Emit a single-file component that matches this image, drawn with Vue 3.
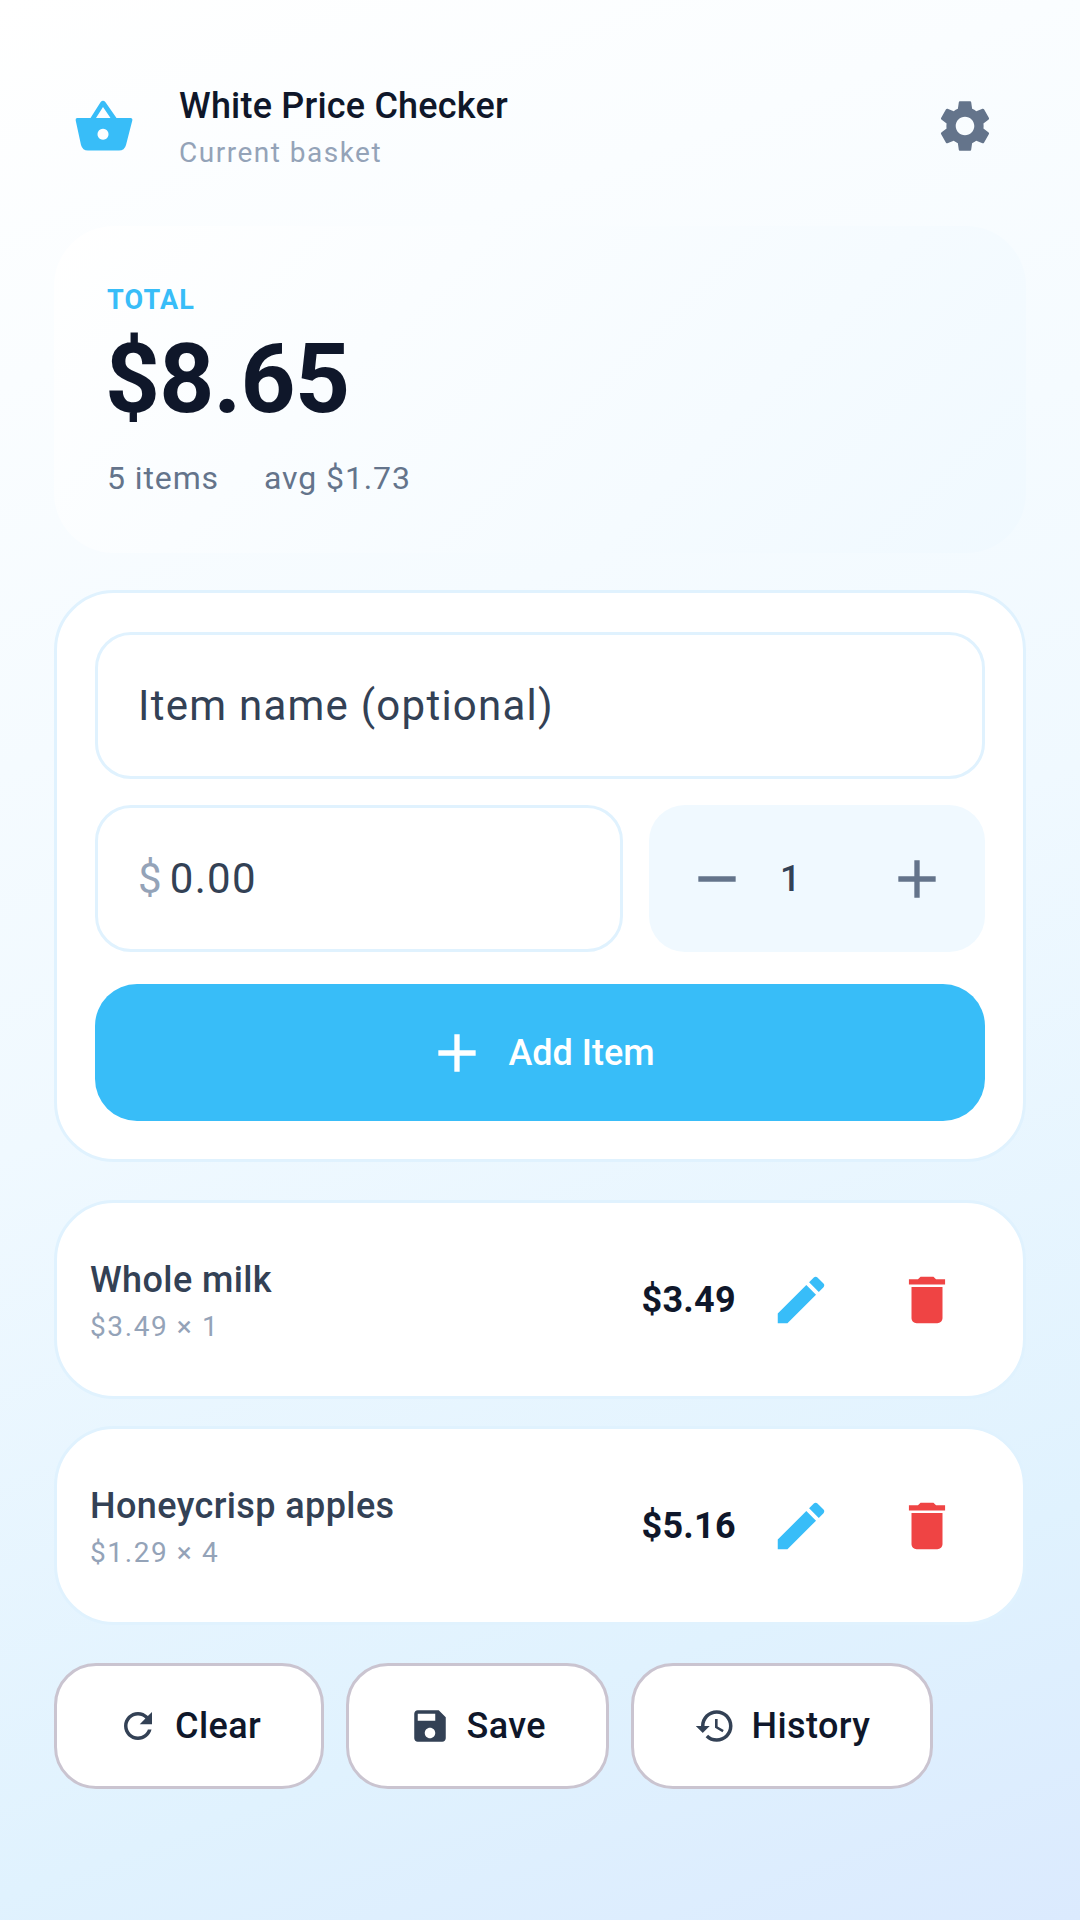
<script setup>
import { ref } from 'vue'

const items = ref([
  { name: 'Whole milk', detail: '$3.49 × 1', total: '$3.49' },
  { name: 'Honeycrisp apples', detail: '$1.29 × 4', total: '$5.16' }
])

const actions = ref([
  {
    label: 'Clear',
    icon: 'M17.65 6.35C16.2 4.9 14.21 4 12 4c-4.42 0-7.99 3.58-7.99 8s3.57 8 7.99 8c3.73 0 6.84-2.55 7.73-6h-2.08c-.82 2.33-3.04 4-5.65 4-3.31 0-6-2.69-6-6s2.69-6 6-6c1.66 0 3.14.69 4.22 1.78L13 11h7V4l-2.35 2.35z'
  },
  {
    label: 'Save',
    icon: 'M17 3H5c-1.11 0-2 .9-2 2v14c0 1.1.89 2 2 2h14c1.1 0 2-.9 2-2V7l-4-4zm-5 16c-1.66 0-3-1.34-3-3s1.34-3 3-3 3 1.34 3 3-1.34 3-3 3zm3-10H5V5h10v4z'
  },
  {
    label: 'History',
    icon: 'M13 3c-4.97 0-9 4.03-9 9H1l3.89 3.89.07.14L9 12H6c0-3.87 3.13-7 7-7s7 3.13 7 7-3.13 7-7 7c-1.93 0-3.68-.79-4.94-2.06l-1.42 1.42C8.27 19.99 10.51 21 13 21c4.97 0 9-4.03 9-9s-4.03-9-9-9zm-1 5v5l4.28 2.54.72-1.21-3.5-2.08V8h-1.5z'
  }
])

const plus = 'M19 13h-6v6h-2v-6H5v-2h6V5h2v6h6v2z'
</script>

<template>
  <div class="page">
    <header class="top">
      <div class="logo">
        <svg viewBox="0 0 60 54" class="logo-icon">
          <path fill-rule="evenodd" d="M3 19H16.500L26.500 3.200Q29 0.500 31.500 3.200L42.500 19H56.500Q58.800 19 58.300 21.500L52 46Q50.500 51.500 45 51.500H14Q8.500 51.500 7 46L1.700 21.500Q1.200 19 3 19ZM22 19H36.500L29 8ZM29 29.800a5.500 5.500 0 1 0 0.010 0Z"/>
        </svg>
      </div>
      <div class="brand">
        <h1>White Price Checker</h1>
        <p>Current basket</p>
      </div>
      <button class="gear">
        <svg viewBox="0 0 24 24"><path d="M19.14 12.94c.04-.3.06-.61.06-.94 0-.32-.02-.64-.07-.94l2.03-1.58c.18-.14.23-.41.12-.61l-1.92-3.32c-.12-.22-.37-.29-.59-.22l-2.39.96c-.5-.38-1.03-.7-1.62-.94l-.36-2.54c-.04-.24-.24-.41-.48-.41h-3.84c-.24 0-.43.17-.47.41l-.36 2.54c-.59.24-1.13.57-1.62.94l-2.39-.96c-.22-.08-.47 0-.59.22L2.74 8.87c-.12.21-.08.47.12.61l2.03 1.58c-.05.3-.09.63-.09.94s.02.64.07.94l-2.03 1.58c-.18.14-.23.41-.12.61l1.92 3.32c.12.22.37.29.59.22l2.39-.96c.5.38 1.03.7 1.62.94l.36 2.54c.05.24.24.41.48.41h3.84c.24 0 .44-.17.47-.41l.36-2.54c.59-.24 1.13-.56 1.62-.94l2.39.96c.22.08.47 0 .59-.22l1.92-3.32c.12-.22.07-.47-.12-.61l-2.01-1.58zM12 15.6c-1.98 0-3.6-1.62-3.6-3.6s1.62-3.6 3.6-3.6 3.6 1.62 3.6 3.6-1.62 3.6-3.6 3.6z"/></svg>
      </button>
    </header>

    <section class="hero">
      <span class="hero-label">TOTAL</span>
      <div class="hero-total">$8.65</div>
      <div class="hero-meta">
        <span>5 items</span>
        <span>avg $1.73</span>
      </div>
    </section>

    <section class="form">
      <div class="field">Item name (optional)</div>
      <div class="form-row">
        <div class="field price"><span class="currency">$</span>0.00</div>
        <div class="stepper">
          <svg viewBox="0 0 24 24"><path d="M19 13H5v-2h14v2z"/></svg>
          <span class="qty">1</span>
          <svg viewBox="0 0 24 24"><path :d="plus"/></svg>
        </div>
      </div>
      <button class="add">
        <svg viewBox="0 0 24 24"><path :d="plus"/></svg>
        <span>Add Item</span>
      </button>
    </section>

    <div class="items">
      <div v-for="item in items" :key="item.name" class="item">
        <div class="item-info">
          <div class="item-name">{{ item.name }}</div>
          <div class="item-detail">{{ item.detail }}</div>
        </div>
        <div class="item-total">{{ item.total }}</div>
        <button class="icon-btn edit">
          <svg viewBox="0 0 24 24"><path d="M3 17.25V21h3.75L17.81 9.94l-3.75-3.75L3 17.25zM20.71 7.04c.39-.39.39-1.02 0-1.41l-2.34-2.34c-.39-.39-1.02-.39-1.41 0l-1.83 1.83 3.75 3.75 1.83-1.83z"/></svg>
        </button>
        <button class="icon-btn del">
          <svg viewBox="0 0 24 24"><path d="M6 19c0 1.1.9 2 2 2h8c1.1 0 2-.9 2-2V7H6v12zM19 4h-3.5l-1-1h-5l-1 1H5v2h14V4z"/></svg>
        </button>
      </div>
    </div>

    <div class="actions">
      <button v-for="action in actions" :key="action.label" class="action">
        <svg viewBox="0 0 24 24"><path :d="action.icon"/></svg>
        <span>{{ action.label }}</span>
      </button>
    </div>
  </div>
</template>

<style>
html, body {
  margin: 0;
  padding: 0;
}
</style>

<style scoped>
* {
  box-sizing: border-box;
}

.page {
  width: 1080px;
  height: 1920px;
  padding: 66px 54px 0;
  overflow: hidden;
  font-family: Roboto, "Noto Sans", sans-serif;
  background: linear-gradient(160deg, #ffffff 0%, #f0f9ff 50%, #e0f2fe 82%, #dbeafe 100%);
}

button {
  border: none;
  background: none;
  padding: 0;
  font-family: inherit;
  display: flex;
  align-items: center;
  justify-content: center;
}

.top {
  display: flex;
  align-items: center;
  height: 120px;
}

.logo {
  width: 125px;
  height: 120px;
  display: flex;
  align-items: center;
  padding-left: 20px;
}

.logo-icon {
  width: 60px;
  height: 54px;
  fill: #38bdf8;
}

.brand {
  flex: 1;
}

.brand h1 {
  margin: 2px 0 0;
  font-size: 36px;
  line-height: 44px;
  font-weight: 500;
  letter-spacing: 0.2px;
  color: #0f172a;
}

.brand p {
  margin: 7px 0 0;
  font-size: 28px;
  line-height: 36px;
  letter-spacing: 1.5px;
  font-weight: 400;
  color: #94a3b8;
}

.gear {
  width: 62px;
  height: 62px;
  margin-right: 30px;
}

.gear svg {
  width: 62px;
  height: 62px;
  fill: #64748b;
}

.hero {
  margin-top: 40px;
  height: 327px;
  padding: 59px 53px 0;
  border-radius: 60px;
  background: linear-gradient(135deg, #ffffff 0%, #f0f9ff 100%);
}

.hero-label {
  display: block;
  font-size: 27px;
  line-height: 30px;
  font-weight: 700;
  letter-spacing: 1.2px;
  color: #38bdf8;
}

.hero-total {
  margin-top: 8px;
  margin-left: -2px;
  font-size: 96px;
  line-height: 112px;
  font-weight: 700;
  letter-spacing: -0.8px;
  color: #0f172a;
}

.hero-meta {
  display: flex;
  gap: 45px;
  margin-top: 24px;
  font-size: 32px;
  line-height: 38px;
  letter-spacing: 0.9px;
  color: #64748b;
}

.form {
  margin-top: 37px;
  height: 572px;
  padding: 39px 38px 0;
  background: #ffffff;
  border: 3px solid #e0f2fe;
  border-radius: 60px;
}

.field {
  height: 147px;
  padding: 0 40px;
  display: flex;
  align-items: center;
  background: #ffffff;
  border: 3px solid #e0f2fe;
  border-radius: 36px;
  font-size: 42px;
  letter-spacing: 1.25px;
  color: #334155;
}

.form-row {
  display: flex;
  gap: 26px;
  margin-top: 26px;
}

.price {
  flex: 0 0 528px;
}

.currency {
  margin-right: 7px;
  color: #94a3b8;
}

.stepper {
  flex: 1;
  height: 147px;
  padding: 0 36px;
  display: flex;
  align-items: center;
  background: #f0f9ff;
  border-radius: 36px;
}

.stepper svg {
  width: 64px;
  height: 64px;
  flex: none;
  fill: #64748b;
}

.qty {
  flex: 1;
  padding-left: 31px;
  font-size: 36px;
  font-weight: 500;
  color: #334155;
}

.add {
  width: 100%;
  height: 137px;
  margin-top: 32px;
  gap: 19px;
  background: #38bdf8;
  border-radius: 42px;
  color: #ffffff;
  font-size: 36px;
  font-weight: 500;
}

.add svg {
  width: 64px;
  height: 64px;
  fill: #ffffff;
}

.items {
  display: flex;
  flex-direction: column;
  gap: 27px;
  margin-top: 38px;
}

.item {
  height: 199px;
  padding: 0 33px;
  display: flex;
  align-items: center;
  background: #ffffff;
  border: 3px solid #e0f2fe;
  border-radius: 60px;
}

.item-info {
  flex: 1;
  padding-top: 3px;
}

.item-name {
  font-size: 36px;
  line-height: 44px;
  font-weight: 500;
  letter-spacing: 0.4px;
  color: #334155;
}

.item-detail {
  margin-top: 7px;
  font-size: 28px;
  line-height: 36px;
  letter-spacing: 1.6px;
  color: #94a3b8;
}

.item-total {
  margin-right: 2px;
  font-size: 36px;
  font-weight: 700;
  letter-spacing: 0.3px;
  color: #0f172a;
}

.icon-btn {
  width: 126px;
  height: 126px;
}

.icon-btn svg {
  width: 62px;
  height: 62px;
}

.edit svg {
  fill: #38bdf8;
}

.del svg {
  fill: #ef4444;
}

.actions {
  display: flex;
  gap: 21.5px;
  margin-top: 38px;
}

.action {
  height: 126px;
  padding: 0 60px;
  gap: 16px;
  background: #ffffff;
  border: 3px solid #cac4d0;
  border-radius: 42px;
  color: #0f172a;
  font-size: 36px;
  font-weight: 500;
  letter-spacing: 0.4px;
}

.action svg {
  width: 42px;
  height: 42px;
  fill: #334155;
}
</style>
